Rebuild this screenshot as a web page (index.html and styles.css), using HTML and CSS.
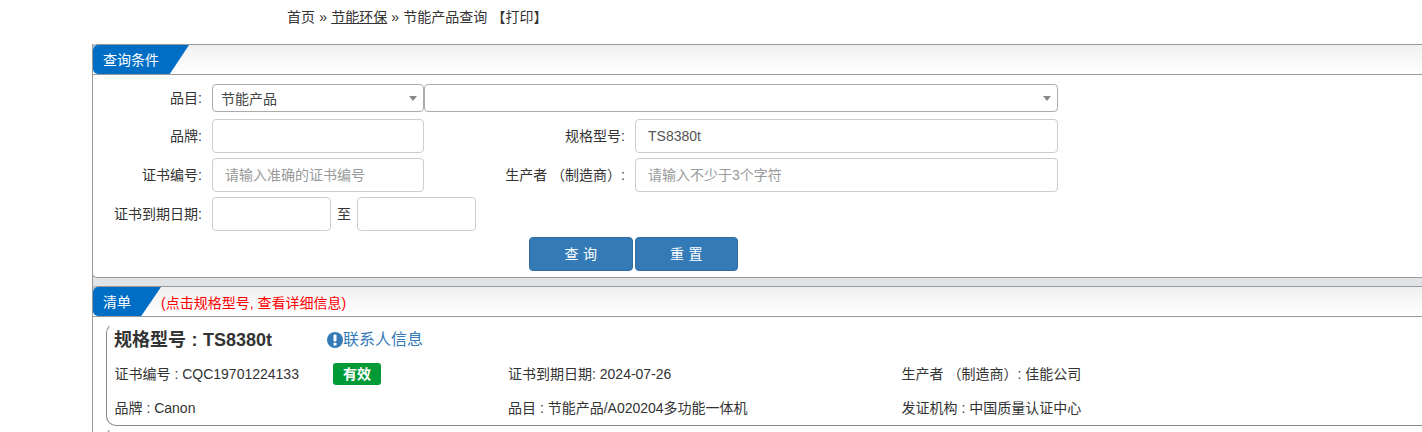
FILE: index.html
```html
<!DOCTYPE html>
<html lang="zh-CN">
<head>
<meta charset="utf-8">
<title>节能产品查询</title>
<link rel="stylesheet" href="styles.css">
</head>
<body>
<div class="crumbs">首页 » <a href="#">节能环保</a> » 节能产品查询 【打印】</div>
<main class="page">
  <section class="panel panel-search">
    <header class="panel-head"><span class="tab tab-search">查询条件</span></header>
    <form class="form">
      <div class="row row-select">
        <label class="lbl">品目:</label>
        <div class="select sel-a"><span>节能产品</span><i class="caret"></i></div>
        <div class="select sel-b"><span></span><i class="caret"></i></div>
      </div>
      <div class="row">
        <label class="lbl">品牌:</label>
        <input class="input w-main" type="text">
        <label class="lbl lbl-2">规格型号:</label>
        <input class="input w-wide" type="text" value="TS8380t">
      </div>
      <div class="row">
        <label class="lbl">证书编号:</label>
        <input class="input w-main" type="text" placeholder="请输入准确的证书编号">
        <label class="lbl lbl-2">生产者 （制造商）:</label>
        <input class="input w-wide" type="text" placeholder="请输入不少于3个字符">
      </div>
      <div class="row">
        <label class="lbl">证书到期日期:</label>
        <input class="input w-date" type="text">
        <span class="to">至</span>
        <input class="input w-date" type="text">
      </div>
      <div class="actions">
        <button class="btn btn-q" type="button">查 询</button>
        <button class="btn btn-r" type="button">重 置</button>
      </div>
    </form>
  </section>
  <section class="panel panel-list">
    <header class="panel-head"><span class="tab tab-list">清单</span><span class="hint">(点击规格型号, 查看详细信息)</span></header>
    <div class="cards">
      <article class="card">
        <div class="card-title">
          <h3>规格型号 : TS8380t</h3>
          <a class="contact" href="#"><svg class="info" viewBox="0 0 16 16" width="16" height="16"><circle cx="8" cy="8" r="8" fill="#337ab7"/><rect x="6.5" y="2.6" width="3" height="7" rx="1" fill="#fff"/><rect x="6.5" y="10.8" width="3" height="2.7" rx=".6" fill="#fff"/></svg>联系人信息</a>
        </div>
        <div class="card-grid">
          <div class="cell">证书编号 : CQC19701224133<span class="badge">有效</span></div>
          <div class="cell">证书到期日期: 2024-07-26</div>
          <div class="cell">生产者 （制造商）: 佳能公司</div>
          <div class="cell">品牌 : Canon</div>
          <div class="cell">品目 : 节能产品/A020204多功能一体机</div>
          <div class="cell">发证机构 : 中国质量认证中心</div>
        </div>
      </article>
      <article class="card"></article>
    </div>
  </section>
</main>
</body>
</html>
```
FILE: styles.css
```css
* { box-sizing: border-box; }
html, body { margin: 0; height: 432px; overflow: hidden; background: #fff; }
body { font-family: "Liberation Sans", "Noto Sans CJK SC", sans-serif; font-size: 14px; color: #333; line-height: 20px; }
.crumbs { height: 44px; padding: 7px 0 0 287px; color: #333; word-spacing: 0.3px; }
.crumbs a { color: #333; }
.page { margin-left: 92px; width: 1400px; background: #e0e4e7; box-shadow: inset 1px 0 0 #999; }
.panel { border: 1px solid #999; border-right: 0; background: #fff; border-radius: 5px 0 0 5px; }
.panel-search { height: 234px; margin-bottom: 8px; }
.panel-head { height: 30px; display: flex; align-items: center; border-bottom: 1px solid #999; border-radius: 5px 0 0 0; background: linear-gradient(#f0f0f0, #fff); }
.tab { height: 29px; background: #016ec6; color: #fff; padding: 1px 0 0 10px; line-height: 28px; border-radius: 5px 0 0 5px; }
.tab-search { width: 96px; clip-path: polygon(0 0, 100% 0, 80% 100%, 0 100%); }
.tab-list { width: 68px; clip-path: polygon(0 0, 100% 0, 71% 100%, 0 100%); }
.hint { color: #f00; padding-top: 2px; }
.form { padding: 9px 0 0; }
.row { display: flex; align-items: center; height: 34px; margin-bottom: 5px; }
.row-select { height: 28px; margin-bottom: 7px; }
.lbl { width: 109px; text-align: right; margin-right: 10px; flex: none; }
.lbl-2 { width: 200px; margin-left: 1px; margin-right: 10px; }
.input { height: 34px; border: 1px solid #ccc; border-radius: 4px; padding: 6px 12px; font: inherit; color: #555; background: #fff; }
.input::placeholder { color: #999; opacity: 1; }
.w-main { width: 212px; }
.w-wide { width: 423px; }
.w-date { width: 119px; }
.to { width: 26px; text-align: center; }
.select { height: 28px; border: 1px solid #aaa; border-radius: 4px; display: flex; align-items: center; justify-content: space-between; padding: 1px 6px 0 8px; color: #444; background: #fff; }
.sel-a { width: 212px; }
.sel-b { width: 634px; }
.caret { width: 0; height: 0; border: 4px solid transparent; border-top: 5px solid #888; border-bottom: 0; }
.actions { display: flex; gap: 2px; padding-left: 436px; margin-top: 1px; padding-top: 1px; }
.btn { height: 34px; background: #337ab7; border: 1px solid #2e6da4; border-radius: 4px; color: #fff; font: inherit; letter-spacing: 0.3px; }
.btn-q { width: 104px; }
.btn-r { width: 103px; }
.cards { padding: 6px 0 0 13px; }
.card { width: 1324px; height: 103px; border: 1px solid #888; border-top-color: transparent; border-radius: 10px; padding: 5px 7px 0; }
.card + .card { margin-top: 1px; }
.card-title { display: flex; align-items: center; height: 22px; }
h3 { margin: 0; font-size: 18px; font-weight: bold; color: #333; width: 213px; line-height: 22px; word-spacing: 0.5px; }
.contact { display: flex; align-items: center; color: #337ab7; font-size: 16px; text-decoration: none; }
.card-grid { display: grid; grid-template-columns: repeat(3, 393.5px); grid-auto-rows: 34px; margin-top: 6px; padding-left: 0.5px; }
.cell { display: flex; align-items: center; white-space: pre-wrap; color: #333; }
.badge { background: #009a36; color: #fff; font-weight: bold; border-radius: 3px; width: 48px; height: 22px; line-height: 22px; text-align: center; margin-left: 34px; }
```
